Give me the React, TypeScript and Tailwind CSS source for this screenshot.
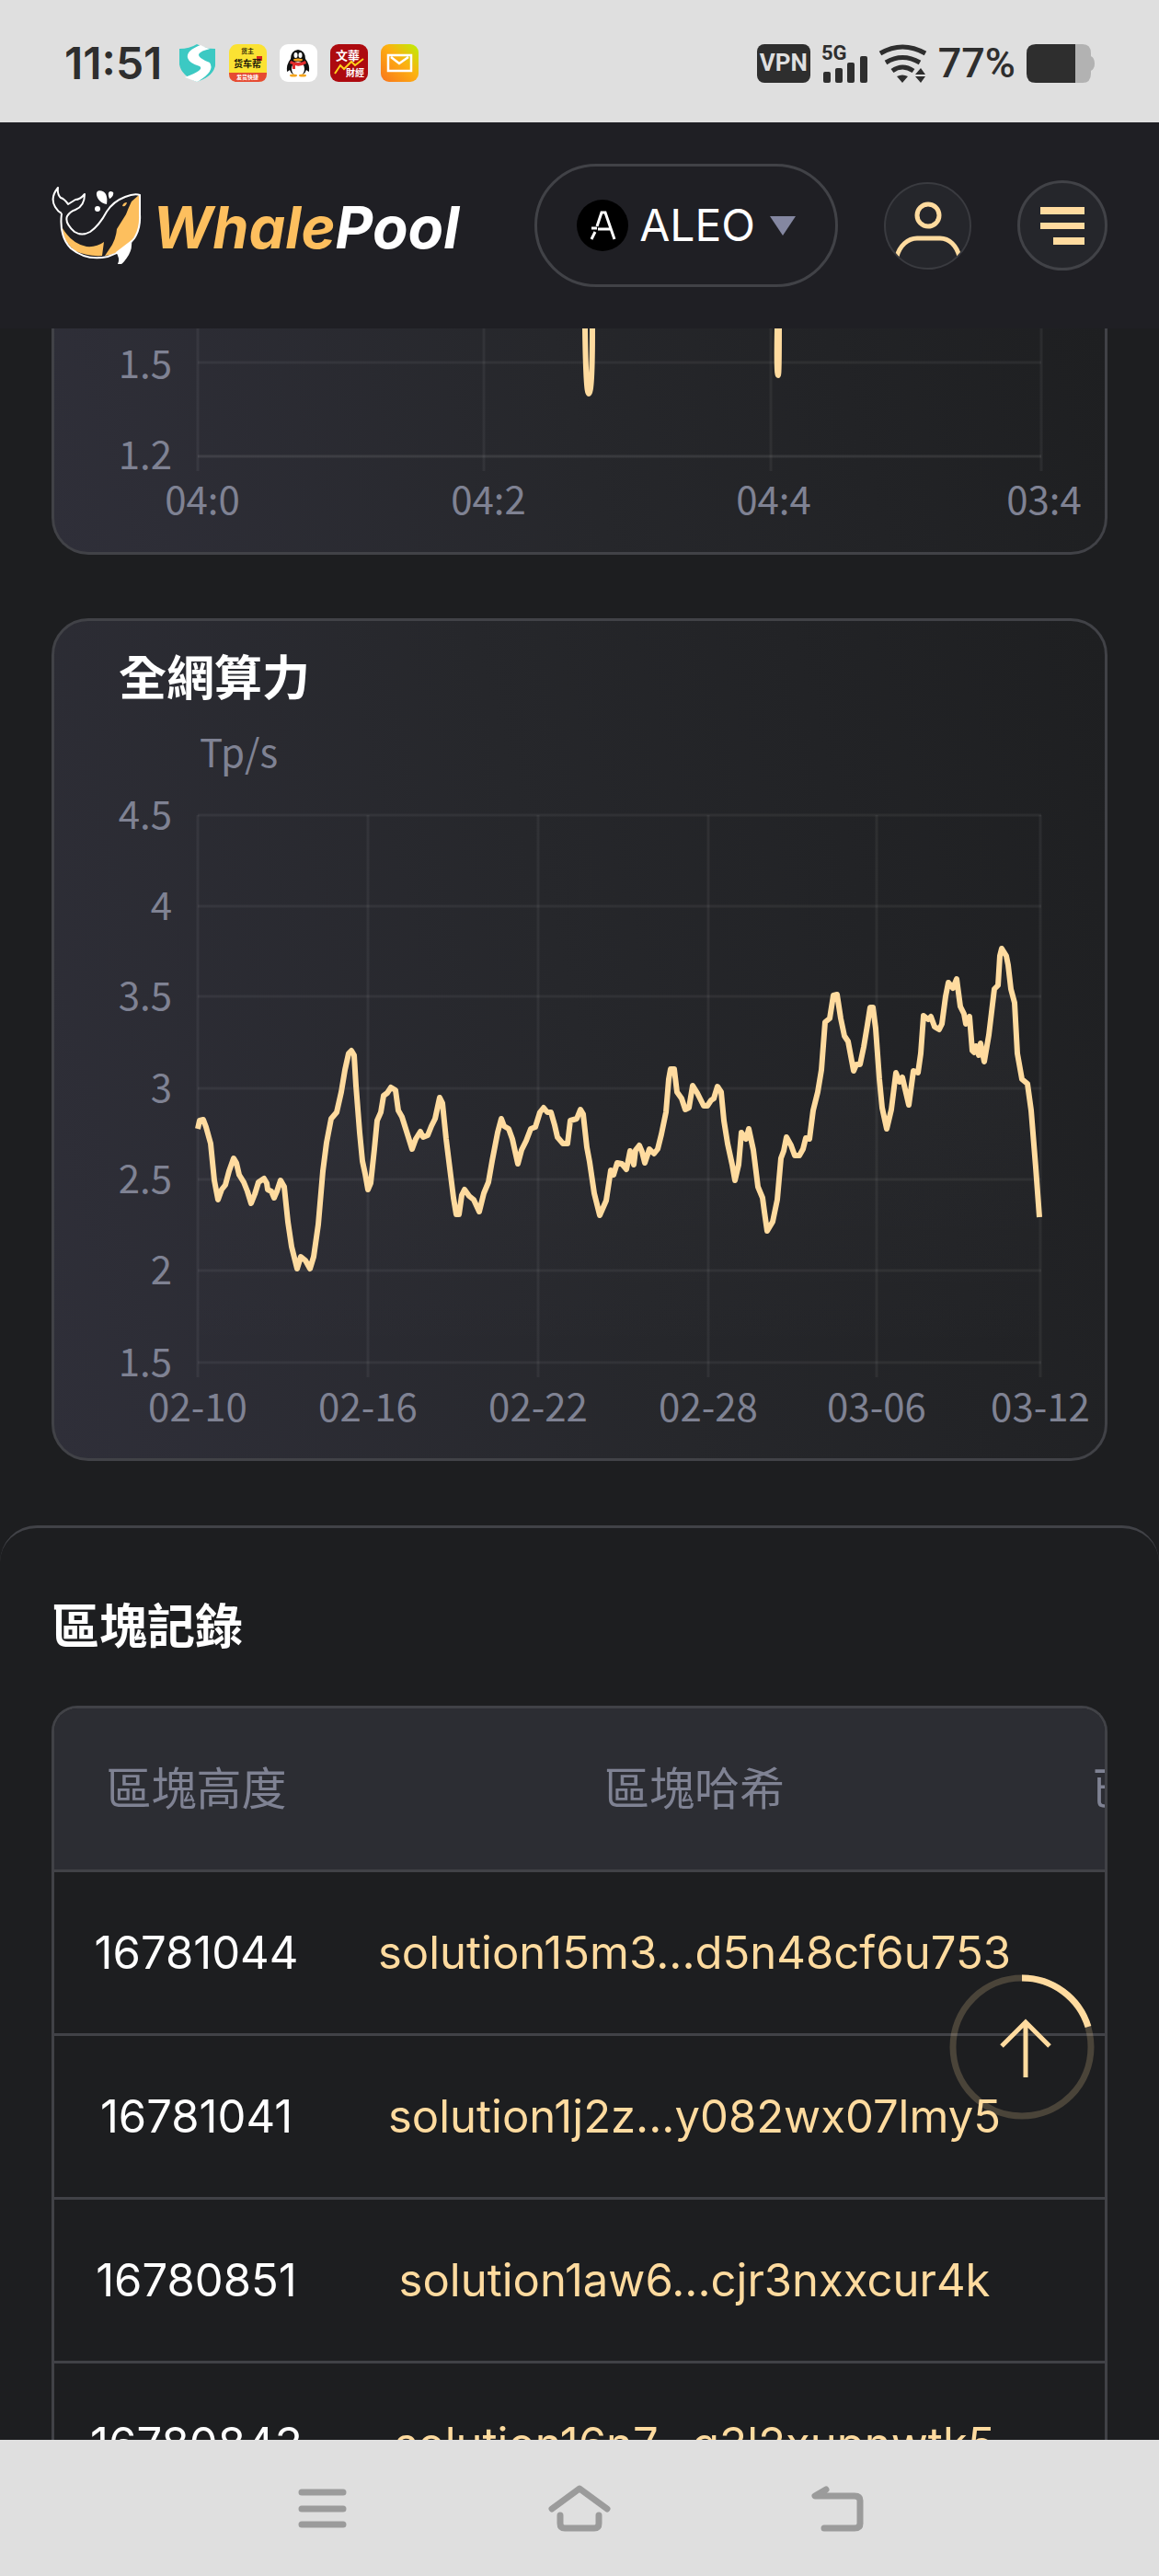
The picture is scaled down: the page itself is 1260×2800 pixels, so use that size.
import React from "react";

const FONT = "font-[Inter,'Noto_Sans_CJK_TC',sans-serif]";
const CHART_FONT = "'Noto Sans CJK TC', sans-serif";

type Point = [number, number];

const hashrate: Point[] = [
  [155, 552], [157, 543], [161, 542], [164, 550], [169, 568], [173, 608], [177, 629], [181, 618], [185, 613],
  [189, 598], [194, 584], [197, 589], [200, 602], [205, 610], [209, 620], [213, 633], [217, 623], [221, 610],
  [227, 606], [230, 611], [231, 618], [235, 620], [238, 627], [241, 620], [245, 608], [249, 615], [253, 653],
  [257, 680], [263, 704], [267, 691], [272, 695], [277, 704], [281, 691], [286, 656], [291, 598], [295, 567],
  [300, 541], [306, 534], [311, 512], [315, 488], [319, 470], [322, 467], [325, 472], [327, 505], [331, 556],
  [334, 587], [337, 601], [340, 618], [343, 611], [347, 574], [350, 543], [354, 534], [357, 516], [361, 513],
  [365, 507], [370, 510], [373, 532], [377, 539], [383, 558], [388, 574], [392, 563], [397, 555], [400, 561],
  [405, 559], [409, 549], [413, 541], [418, 518], [421, 524], [425, 563], [430, 603], [433, 627], [436, 645],
  [439, 645], [442, 624], [445, 618], [450, 625], [455, 629], [461, 642], [466, 622], [471, 610], [475, 587],
  [481, 556], [485, 541], [488, 549], [493, 552], [497, 563], [503, 590], [507, 575], [512, 565], [517, 552],
  [522, 550], [527, 534], [531, 529], [535, 534], [539, 534], [543, 548], [546, 561], [552, 568], [557, 568],
  [560, 543], [567, 541], [571, 531], [574, 536], [578, 572], [581, 588], [586, 622], [592, 646], [599, 630],
  [604, 597], [607, 602], [611, 589], [616, 590], [621, 596], [625, 576], [629, 591], [631, 575], [635, 570],
  [638, 577], [641, 589], [646, 574], [651, 579], [655, 574], [659, 558], [664, 534], [667, 498], [669, 487],
  [673, 487], [676, 512], [681, 519], [685, 531], [689, 529], [693, 505], [698, 513], [701, 519], [705, 527],
  [709, 527], [713, 521], [716, 519], [720, 506], [724, 512], [727, 543], [731, 568], [736, 591], [739, 608],
  [743, 591], [746, 556], [751, 563], [754, 552], [759, 575], [764, 615], [769, 627], [771, 642], [774, 663],
  [780, 653], [785, 629], [789, 584], [792, 576], [795, 561], [800, 570], [804, 581], [809, 581], [813, 574],
  [816, 562], [820, 563], [824, 532], [829, 512], [833, 488], [837, 436], [842, 432], [846, 407], [850, 406],
  [854, 432], [858, 451], [862, 457], [868, 489], [871, 482], [875, 482], [879, 463], [883, 439], [886, 420],
  [889, 420], [892, 443], [896, 498], [899, 529], [904, 552], [909, 531], [914, 491], [918, 501], [921, 496],
  [928, 526], [933, 489], [938, 491], [941, 470], [944, 429], [949, 433], [952, 430], [956, 441], [961, 444],
  [964, 438], [968, 408], [971, 393], [976, 399], [980, 389], [984, 419], [988, 427], [990, 438], [994, 430],
  [997, 467], [999, 469], [1001, 462], [1004, 472], [1006, 459], [1010, 479], [1015, 450], [1021, 400],
  [1025, 396], [1027, 364], [1029, 356], [1034, 364], [1036, 374], [1039, 400], [1043, 415], [1046, 470],
  [1051, 498], [1057, 503], [1061, 532], [1066, 594], [1070, 648],
];

const rows = [
  { height: "16781044", hash: "solution15m3...d5n48cf6u753" },
  { height: "16781041", hash: "solution1j2z...y082wx07lmy5" },
  { height: "16780851", hash: "solution1aw6...cjr3nxxcur4k" },
  { height: "16780843", hash: "solution16n7...g3l2xupnwtk5" },
];

const toPoints = (points: Point[]) => points.map((p) => p.join(",")).join(" ");

function StatusBar() {
  return (
    <div className="flex h-[133px] shrink-0 items-center justify-between bg-[#dfdfdf] pt-1 pr-[70px] pl-[70px] text-[#2e2e2e]">
      <div className="flex items-center gap-[14px]">
        <time className="mr-1 text-[48px] leading-[56px] font-semibold">11:51</time>
        <svg width="41" height="41" viewBox="0 0 41 41" aria-label="Shield">
          <path d="M1 5Q12 5 20 0Q29 5 40 5V22Q38 34 20 41Q3 34 1 22Z" fill="#3cc9c3" />
          <path d="M24 1Q8 7 10 15Q12 21 23 24Q29 28 7 36L20 41Q38 34 36 22Q33 17 25 15Q18 11 35 5Q29 4 24 1Z" fill="#fff" />
          <path d="M40 5V22Q39 34 22 40Q40 29 34 20Q21 15 22 11Q24 7 35 5Z" fill="#3cc9c3" />
        </svg>
        <svg width="41" height="41" viewBox="0 0 41 41" aria-label="货车帮" fontFamily="'Noto Sans CJK SC', sans-serif" fontWeight="700" textAnchor="middle">
          <rect width="41" height="41" rx="9" fill="#fbe233" />
          <path d="M0 31H41V32Q41 41 32 41H9Q0 41 0 32Z" fill="#e64a32" />
          <rect x="30" y="13" width="6" height="5" fill="#d5281e" />
          <text x="20" y="10" fontSize="7" fill="#3b320b">货主</text>
          <text x="20" y="25" fontSize="10" fill="#1d1a08">货车帮</text>
          <text x="20" y="38" fontSize="6" fill="#fff">发货快捷</text>
        </svg>
        <svg width="41" height="41" viewBox="0 0 41 41" aria-label="QQ">
          <rect width="41" height="41" rx="9" fill="#fff" />
          <path d="M20 6Q28 7 28 16Q33 22 32 30Q30 29 29 28Q27 34 20 34Q13 34 11 28Q10 29 8 30Q7 22 12 16Q12 7 20 6Z" fill="#111" />
          <ellipse cx="20" cy="27" rx="7" ry="8" fill="#fff" />
          <path d="M12 18Q20 22 28 18L29 21Q22 25 17 23V27H14V22L11 21Z" fill="#e12d2d" />
          <ellipse cx="17.500" cy="12" rx="2" ry="3" fill="#fff" />
          <ellipse cx="22.500" cy="12" rx="2" ry="3" fill="#fff" />
          <ellipse cx="20" cy="17" rx="5" ry="1.500" fill="#f5a51c" />
          <ellipse cx="15" cy="34" rx="4" ry="1.500" fill="#f5a51c" />
          <ellipse cx="25" cy="34" rx="4" ry="1.500" fill="#f5a51c" />
        </svg>
        <svg width="41" height="41" viewBox="0 0 41 41" aria-label="文華財經" fontFamily="'Noto Sans CJK TC', sans-serif" fontWeight="700" fill="#fff">
          <rect width="41" height="41" rx="9" fill="#ad0a0f" />
          <text x="6" y="17" fontSize="13">文華</text>
          <text x="17" y="35" fontSize="10">財經</text>
          <path d="M5 32L11 23L15 27L23 19L27 23L36 16" fill="none" stroke="#ffd21c" strokeWidth="2" />
        </svg>
        <svg width="41" height="41" viewBox="0 0 41 41" aria-label="Mail">
          <defs>
            <linearGradient id="mail" x1="0" y1="1" x2="1" y2="0">
              <stop offset="0" stopColor="#f9741c" />
              <stop offset=".55" stopColor="#fdb011" />
              <stop offset="1" stopColor="#b9f205" />
            </linearGradient>
          </defs>
          <rect width="41" height="41" rx="9" fill="url(#mail)" />
          <path d="M8 12H33V29H8ZM11 14L20 21L30 14" fill="none" stroke="#fff" strokeWidth="2.500" />
        </svg>
      </div>
      <div className="flex items-center gap-3">
        <span className="flex h-[42px] w-[58px] items-center justify-center rounded-lg bg-[#2e2e2e] font-[Roboto,sans-serif] text-[26px] font-bold text-[#dfdfdf]">
          VPN
        </span>
        <svg className="overflow-visible" width="50" height="42" viewBox="0 0 50 42" fill="#2e2e2e" aria-label="5G signal">
          <text x="0" y="17" fontFamily="Roboto, sans-serif" fontWeight="700" fontSize="22">5G</text>
          <rect x="2" y="30" width="8" height="12" rx="2" />
          <rect x="15" y="26" width="8" height="16" rx="2" />
          <rect x="28" y="20" width="8" height="22" rx="2" />
          <rect x="42" y="13" width="8" height="29" rx="2" />
        </svg>
        <svg width="53" height="42" viewBox="0 0 53 42" fill="none" stroke="#2e2e2e" strokeWidth="5" aria-label="Wi-Fi">
          <path d="M2 10Q26 -4 51 10M8 20Q26 9 45 20M15 29Q26 21 38 29" />
          <path d="M20 35Q26 32 32 35L26 42ZM40 33L46 26L51 33ZM40 35L46 42L51 35Z" fill="#2e2e2e" stroke="none" />
        </svg>
        <span className="font-[Roboto,sans-serif] text-[45px] leading-[53px] font-medium">77%</span>
        <svg width="74" height="42" viewBox="0 0 74 42" aria-label="Battery 77%">
          <path d="M53 0H61Q70 0 70 10V13Q74 15 74 21Q74 27 70 29V32Q70 42 61 42H53Z" fill="#b2b2b2" />
          <path d="M10 0H53V42H10Q0 42 0 32V10Q0 0 10 0Z" fill="#2e2e2e" />
        </svg>
      </div>
    </div>
  );
}

function Whale() {
  return (
    <svg width="98" height="85" viewBox="0 0 98 85" fill="none" aria-hidden="true">
      <path d="M95 9L87 16Q84 22 81 30L71 46Q70 56 66 63L58 75Q68 74 78 68Q92 57 96 42Z" fill="#fdbf5e" />
      <path d="M12 45Q22 62 38 65Q49 66 57 60L55 75Q40 76 26 70Q12 59 12 45Z" fill="#fdbf5e" />
      <path d="M87 58Q88 67 84 74Q79 82 76 84H72Q75 78 70 71Z" fill="#fff" />
      <path d="M11 29Q8 54 21 67Q38 81 61 76Q80 70 90 56Q97 45 96 30V9Q90 7 80 11Q67 16 60 27Q52 42 42 49Q33 54 25 49Q14 39 17 32Q20 27 26 25Q36 21 36 8Q31 14 26 14L18 19Q14 13 10 12Q6 8 7 1Q-2 12 4 22Q7 27 11 29" stroke="#fff" strokeWidth="2" strokeLinejoin="round" />
      <path d="M49 9C48 2 57 4 59 8Q61 12 60 19C54 18 50 14 49 9Z" fill="#fff" />
      <path d="M62 10C61 5 64 4 67 6C68 8 66 12 63 13Z" fill="#fff" />
      <circle cx="50" cy="24" r="3" fill="#fff" />
      <path d="M77 21Q78 17 82 17Q81 22 77 21" fill="#fdbf5e" />
    </svg>
  );
}

function Header() {
  return (
    <header className="flex h-56 shrink-0 items-center justify-between bg-[#1f1f24] px-14">
      <a href="#home" className="flex items-center gap-3" aria-label="WhalePool">
        <Whale />
        <span className="pt-1 font-[Inter,sans-serif] text-[63px] leading-[80px] font-bold italic text-white">
          <span className="text-[#fdbf5e]">Whale</span>Pool
        </span>
      </a>
      <div className="flex items-center gap-[50px]">
        <button type="button" className="flex h-[134px] items-center rounded-full border-3 border-[#414247] px-[43px] text-[48px] text-white">
          <svg width="56" height="56" viewBox="0 0 56 56" aria-hidden="true">
            <circle cx="28" cy="28" r="28" fill="#000" />
            <path d="M16 43L20 35M22 29L27 14H31L41 43M23 32H37M16 31H22" fill="none" stroke="#fff" strokeWidth="3" />
          </svg>
          <span className="ml-3">ALEO</span>
          <svg className="ml-4" width="28" height="21" viewBox="0 0 28 21" aria-hidden="true">
            <path d="M0 0H28L14 21Z" fill="#8487a1" />
          </svg>
        </button>
        <button type="button" aria-label="Account" className="size-[95px] overflow-hidden rounded-full border-2 border-[#3a3b40] bg-[#25262b]">
          <svg viewBox="0 0 91 91" fill="none" stroke="#ffdb9f" strokeWidth="5" aria-hidden="true">
            <circle cx="46" cy="34" r="12" />
            <path d="M12 79C15 67 24 59 34 59H59C69 59 77 67 80 79" />
          </svg>
        </button>
        <button type="button" aria-label="Menu" className="size-[98px] rounded-full border-3 border-[#414247] bg-[#25262b]">
          <svg viewBox="0 0 92 92" fill="#ffdb9f" aria-hidden="true">
            <path d="M22 26H70V34H22ZM22 43H70V50H22ZM36 59H70V67H36Z" />
          </svg>
        </button>
      </div>
    </header>
  );
}

function LatencyChart() {
  return (
    <svg viewBox="-1 0 1142 243" className="block h-auto w-full" fontFamily={CHART_FONT} fontSize="42" fill="#7f8293" role="img" aria-label="1.5 – 1.2">
      <path d="M155 0V155M466 0V155M778 0V155M1072 0V155" stroke="#fff" strokeOpacity=".055" strokeWidth="3" />
      <path d="M155 37H1072" stroke="#fff" strokeOpacity=".055" strokeWidth="3" />
      <path d="M155 139H1072" stroke="#fff" strokeOpacity=".09" strokeWidth="3" />
      <path d="M576 0Q577 71 580 71Q584 71 584 0M785 0Q784 51 786 51Q787 51 787 0" fill="none" stroke="#ffdb9f" strokeWidth="6" />
      <g textAnchor="end">
        <text x="127" y="54">1.5</text>
        <text x="127" y="153">1.2</text>
      </g>
      <g textAnchor="middle">
        <text x="160" y="202">04:0</text>
        <text x="471" y="202">04:2</text>
        <text x="781" y="202">04:4</text>
        <text x="1075" y="202">03:4</text>
      </g>
    </svg>
  );
}

const yTicks: [string, number][] = [["4.5", 211], ["4", 310], ["3.5", 408], ["3", 508], ["2.5", 607], ["2", 706], ["1.5", 806]];
const xTicks: [string, number][] = [["02-10", 155], ["02-16", 340], ["02-22", 525], ["02-28", 710], ["03-06", 893], ["03-12", 1071]];

function HashrateChart() {
  return (
    <svg viewBox="-1 0 1142 789" className="block h-auto w-full" fontFamily={CHART_FONT} fontSize="42" fill="#7f8293" role="img" aria-label="全網算力 Tp/s">
      <defs>
        <linearGradient id="area" x1="0" y1="0" x2="0" y2="1">
          <stop offset="0" stopColor="#dfe2ff" stopOpacity=".035" />
          <stop offset="1" stopColor="#dfe2ff" stopOpacity="0" />
        </linearGradient>
      </defs>
      <g transform="translate(0 -121)">
        <text x="157" y="159">Tp/s</text>
        {yTicks.map(([label, y]) => (
          <g key={label}>
            <path d={`M155 ${y}H1072`} stroke="#fff" strokeOpacity=".055" strokeWidth="3" />
            <text x="127" y={y + 15} textAnchor="end">{label}</text>
          </g>
        ))}
        {xTicks.map(([label, x]) => (
          <g key={label}>
            <path d={`M${x} 211V822`} stroke="#fff" strokeOpacity=".055" strokeWidth="3" />
            <text x={x} y="870" textAnchor="middle">{label}</text>
          </g>
        ))}
        <polygon points={`155,807 ${toPoints(hashrate)} 1070,807`} fill="url(#area)" />
        <polyline points={toPoints(hashrate)} fill="none" stroke="#ffdb9f" strokeWidth="6" strokeLinejoin="round" />
      </g>
    </svg>
  );
}

function BlockTable() {
  return (
    <div className="overflow-hidden rounded-t-[28px] border-3 border-b-0 border-[#414247]">
      <table className="w-[1300px] table-fixed border-collapse text-center text-[49px] leading-none">
        <colgroup>
          <col className="w-[309px]" />
          <col className="w-[774px]" />
          <col />
        </colgroup>
        <thead>
          <tr className="h-[176px] border-b-3 border-[#414247] bg-[#2c2d33] text-[#7f8293]">
            <th className="font-normal">區塊高度</th>
            <th className="font-normal">區塊哈希</th>
            <th className="pl-11 text-left font-normal">已</th>
          </tr>
        </thead>
        <tbody>
          {rows.map((row) => (
            <tr key={row.height} className="h-[178px] border-b-3 border-[#414247]">
              <td className="text-white">{row.height}</td>
              <td>
                <a href={`#${row.hash}`} className="text-[#ffdb9f]">{row.hash}</a>
              </td>
              <td />
            </tr>
          ))}
        </tbody>
      </table>
    </div>
  );
}

function BackToTop() {
  return (
    <button type="button" aria-label="Back to top" className="absolute right-[70px] bottom-[496px] size-[158px]">
      <svg viewBox="0 0 158 158" fill="none" stroke="#ffdb9f" aria-hidden="true">
        <circle cx="79" cy="79" r="75" strokeWidth="7" strokeOpacity=".2" />
        <path d="M79 4A75 75 0 0 1 151 57" strokeWidth="7" />
        <path d="M83 112V52M57 78L83 52L109 78" strokeWidth="5" />
      </svg>
    </button>
  );
}

function NavBar() {
  return (
    <nav className="flex h-[148px] shrink-0 items-center justify-center gap-[212px] bg-[#dfdfdf]">
      <button type="button" aria-label="Recent apps">
        <svg width="68" height="52" viewBox="0 0 68 52" stroke="#9b9b9b" strokeWidth="7" strokeLinecap="round">
          <path d="M12 9H57M12 27H57M12 44H57" />
        </svg>
      </button>
      <button type="button" aria-label="Home">
        <svg width="68" height="52" viewBox="0 0 68 52" fill="none" stroke="#9b9b9b" strokeWidth="7" strokeLinecap="round" strokeLinejoin="round">
          <path d="M4 27L34 5L64 27M13 34V43Q13 48 18 48H50Q55 48 55 43V34" />
        </svg>
      </button>
      <button type="button" aria-label="Back">
        <svg width="68" height="52" viewBox="0 0 68 52" fill="none" stroke="#9b9b9b" strokeWidth="7" strokeLinecap="round" strokeLinejoin="round">
          <path d="M22 6L10 13H53Q59 13 59 18V43Q59 48 53 48H20" />
        </svg>
      </button>
    </nav>
  );
}

const card = "border-3 border-[#414247] bg-linear-[75deg] from-[#2f2f39] via-[#26272b] to-[#1e1f21]";

export default function App() {
  return (
    <div className={`relative flex h-screen flex-col overflow-hidden bg-[#1d1e20] ${FONT}`}>
      <StatusBar />
      <Header />
      <main className="min-h-0 flex-1 overflow-hidden">
        <section className={`mx-14 rounded-b-[40px] border-t-0 ${card}`}>
          <LatencyChart />
        </section>
        <section className={`mx-14 mt-[69px] rounded-[40px] ${card}`}>
          <h2 className="px-[70px] pt-[37px] pb-8 text-[52px] leading-[52px] font-bold text-white">全網算力</h2>
          <HashrateChart />
        </section>
        <section className="mt-[70px] rounded-t-[40px] border-t-3 border-[#414247] px-14 pt-[82px]">
          <h2 className="mb-[59px] text-[52px] leading-[52px] font-bold text-white">區塊記錄</h2>
          <BlockTable />
        </section>
      </main>
      <BackToTop />
      <NavBar />
    </div>
  );
}
